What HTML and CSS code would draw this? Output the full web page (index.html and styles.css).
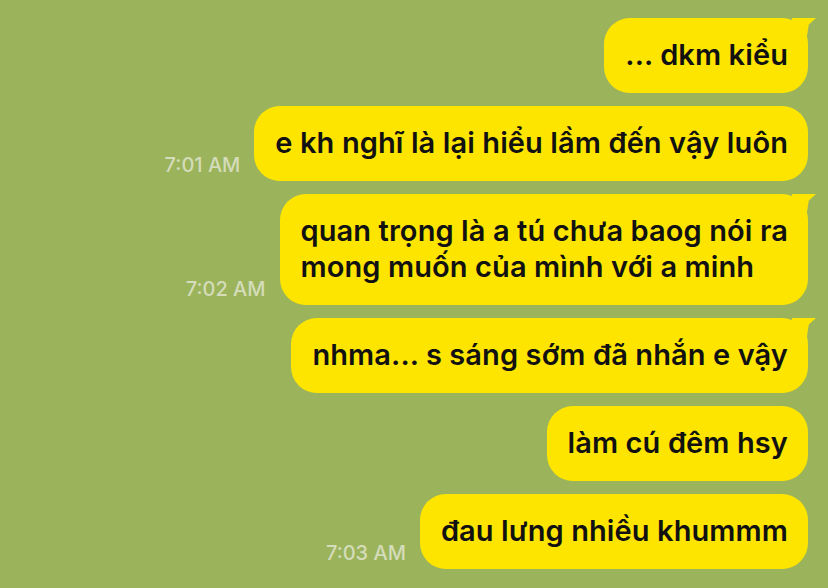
FILE: index.html
```html
<!DOCTYPE html>
<html lang="vi">
<head>
  <meta charset="UTF-8" />
  <title>Chat</title>
  <link rel="stylesheet" href="styles.css">
</head>
<body>

  <div class="chat">
    <div class="row">
      <div class="bubble tail">... dkm kiểu</div>
    </div>
    <div class="row">
      <span class="time">7:01 AM</span>
      <div class="bubble">e kh nghĩ là lại hiểu lầm đến vậy luôn</div>
    </div>
    <div class="row">
      <span class="time">7:02 AM</span>
      <div class="bubble tail">quan trọng là a tú chưa baog nói ra<br>mong muốn của mình với a minh</div>
    </div>
    <div class="row">
      <div class="bubble tail">nhma... s sáng sớm đã nhắn e vậy</div>
    </div>
    <div class="row">
      <div class="bubble">làm cú đêm hsy</div>
    </div>
    <div class="row">
      <span class="time">7:03 AM</span>
      <div class="bubble">đau lưng nhiều khummm</div>
    </div>
  </div>

</body>
</html>
```

FILE: styles.css
```css
body {
  margin: 0;
  background: #9bb35b;
  font-family: Inter, "Noto Sans", sans-serif;
  height: 588px;
  overflow: hidden;
}

.chat {
  display: flex;
  flex-direction: column;
  align-items: flex-end;
  gap: 13px;
  padding: 18px 20px 0 0;
}

.row {
  display: flex;
  align-items: flex-end;
  gap: 14px;
}

.time {
  color: #d4dcb9;
  font-size: 20px;
  font-weight: 500;
  margin-bottom: 4px;
}

.bubble {
  position: relative;
  background: #fee500;
  color: #111;
  font-size: 29px;
  font-weight: 600;
  line-height: 36px;
  letter-spacing: 0.1px;
  padding: 19px 20px 20px 21px;
  border-radius: 26px;
}

/* little horn on the first message of a group */
.bubble.tail::after {
  content: "";
  position: absolute;
  top: 0;
  right: -8px;
  width: 24px;
  height: 22px;
  background: #fee500;
  clip-path: polygon(0 0, 100% 0, 70% 30%, 60% 100%, 0 100%);
}
```
